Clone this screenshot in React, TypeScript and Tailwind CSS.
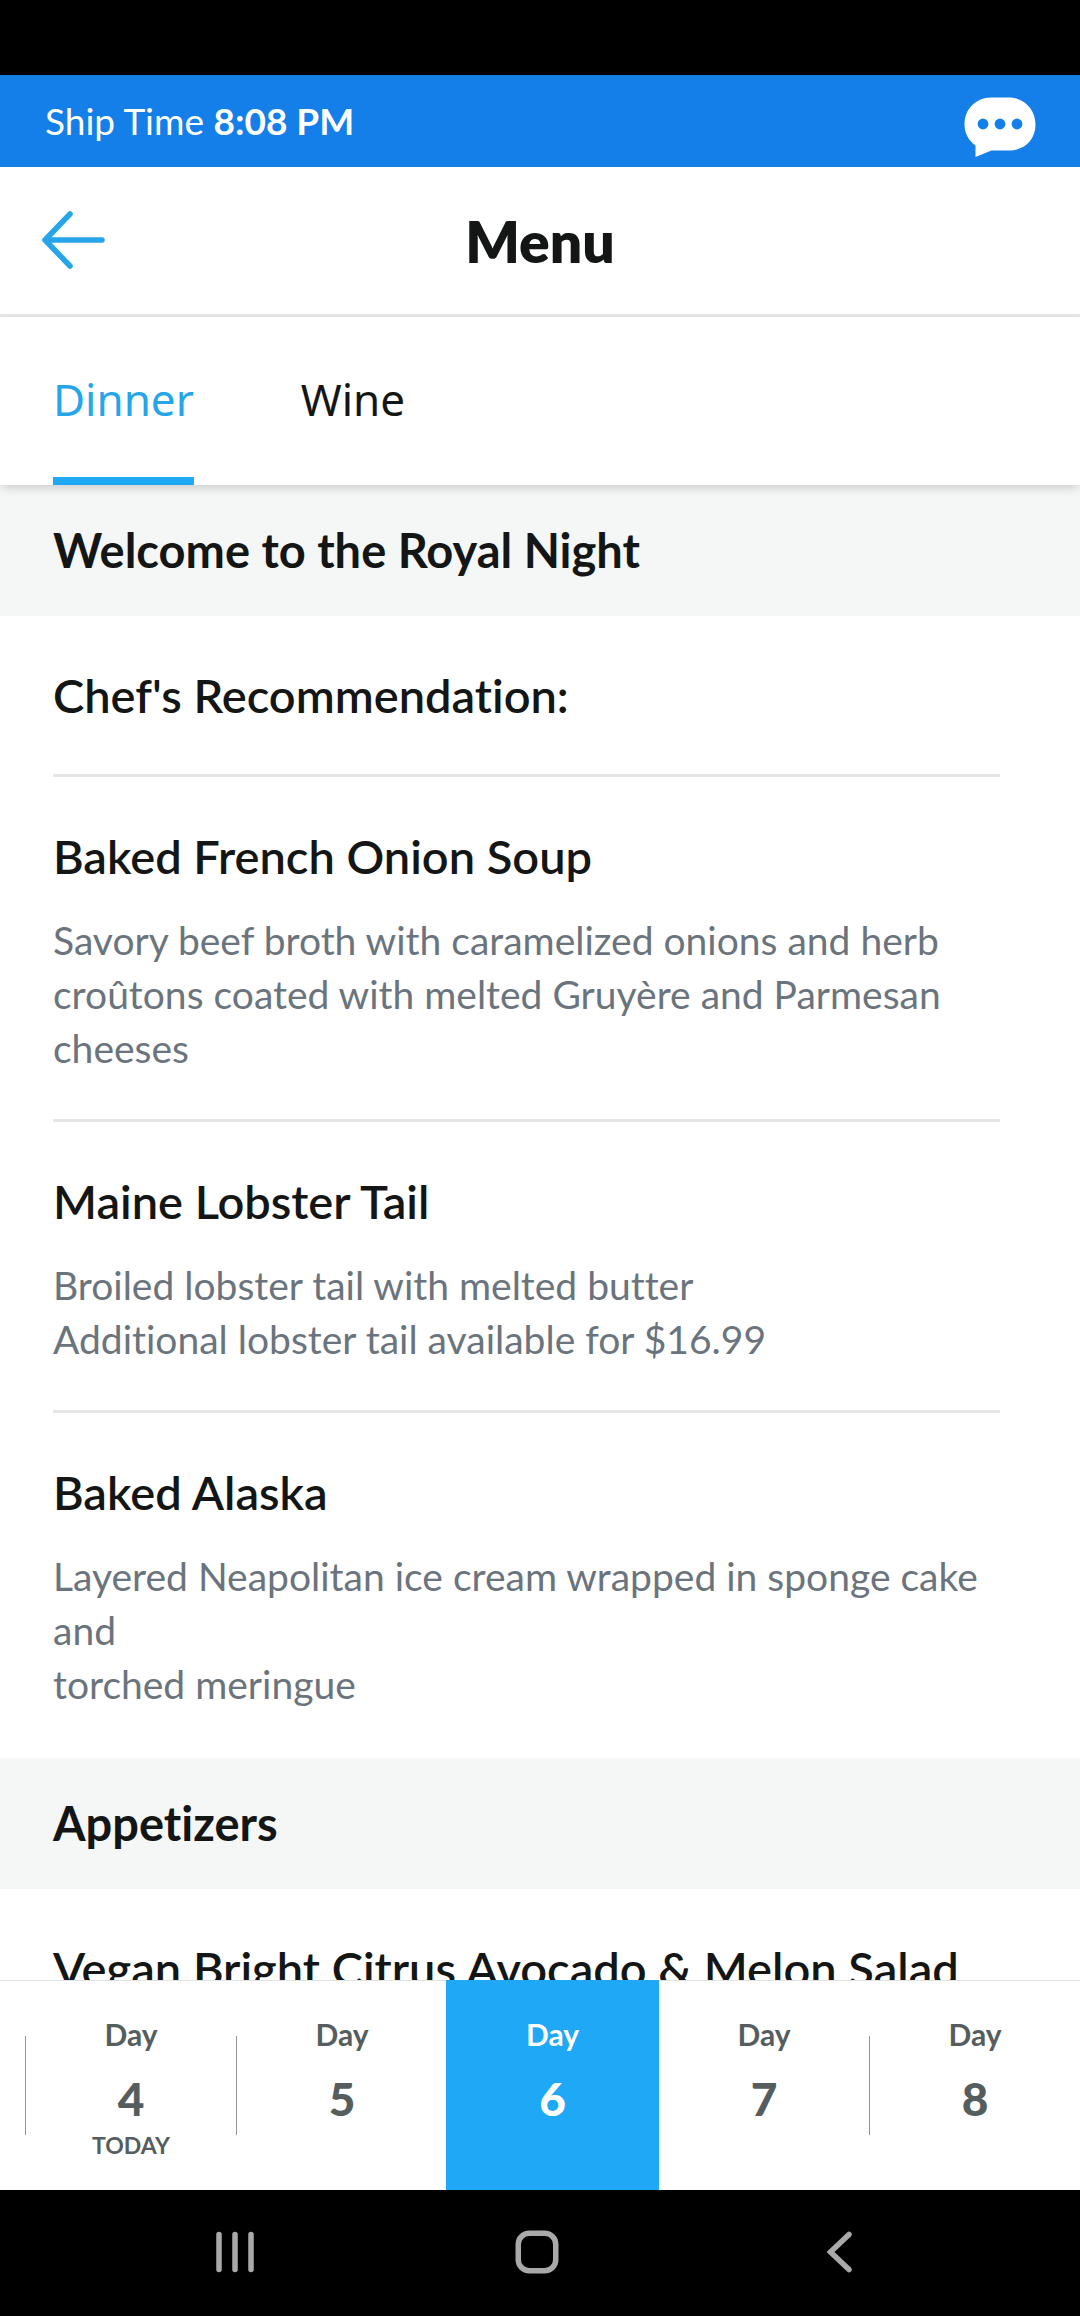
import clsx from "clsx";
import { useState } from "react";

type Dish = {
  name: string;
  description?: string;
};

type MenuSection = {
  title: string;
  dishes: Dish[];
};

const TABS = ["Dinner", "Wine"];

const SECTIONS: MenuSection[] = [
  {
    title: "Welcome to the Royal Night",
    dishes: [
      { name: "Chef's Recommendation:" },
      {
        name: "Baked French Onion Soup",
        description:
          "Savory beef broth with caramelized onions and herb croûtons coated with melted Gruyère and Parmesan cheeses",
      },
      {
        name: "Maine Lobster Tail",
        description:
          "Broiled lobster tail with melted butter\nAdditional lobster tail available for $16.99",
      },
      {
        name: "Baked Alaska",
        description:
          "Layered Neapolitan ice cream wrapped in sponge cake and\ntorched meringue",
      },
    ],
  },
  {
    title: "Appetizers",
    dishes: [{ name: "Vegan Bright Citrus Avocado & Melon Salad" }],
  },
];

const DAYS = [4, 5, 6, 7, 8];
const TODAY = 4;

function ChatIcon() {
  return (
    <svg width="72" height="60" viewBox="0 0 72 60" aria-hidden="true">
      <path
        d="M27 0.5H45C60 0.5 71.5 12 71.5 27.5S60 53.5 45 53.5H27.5L11.5 60V48.5C4.5 43.5 0.5 36 0.5 27.5C0.5 12 12 0.5 27 0.5Z"
        fill="#fff"
      />
      <circle cx="19" cy="27" r="5.4" fill="#147fe9" />
      <circle cx="36" cy="27" r="5.4" fill="#147fe9" />
      <circle cx="53" cy="27" r="5.4" fill="#147fe9" />
    </svg>
  );
}

function BackArrowIcon() {
  return (
    <svg width="64" height="62" viewBox="0 0 64 62" fill="none" aria-hidden="true">
      <path
        d="M28 4L3 30L28 56M5 30H60"
        stroke="#26a5e8"
        strokeWidth="5.5"
        strokeLinecap="round"
        strokeLinejoin="round"
      />
    </svg>
  );
}

function StatusBar() {
  return (
    <div className="flex h-[92px] shrink-0 items-center justify-between bg-[#147fe9] pr-11 pl-[45px] text-white">
      <p className="text-[37px] leading-[44px]">
        Ship Time <span className="font-bold">8:08 PM</span>
      </p>
      <button type="button" aria-label="Chat" className="pt-3">
        <ChatIcon />
      </button>
    </div>
  );
}

function PageHeader() {
  return (
    <header className="grid h-[150px] shrink-0 grid-cols-[1fr_auto_1fr] items-center border-b-3 border-[#e6e6e6] px-[42px]">
      <button type="button" aria-label="Back" className="justify-self-start">
        <BackArrowIcon />
      </button>
      <h1 className="text-[57px] leading-[64px] font-extrabold">Menu</h1>
    </header>
  );
}

function SectionBlock({ section }: { section: MenuSection }) {
  return (
    <section>
      <h2 className="bg-[#f5f7f7] px-[53px] py-9 text-[47px] leading-[59px] font-bold">
        {section.title}
      </h2>
      <ul className="pr-20 pl-[53px]">
        {section.dishes.map((dish) => (
          <li
            key={dish.name}
            className={clsx(
              "border-b-3 border-[#e6e6e6] pt-[53px] last:border-transparent",
              dish.description ? "pb-11" : "pb-[53px]",
            )}
          >
            <h3 className="text-[47px] leading-[52px] font-semibold">{dish.name}</h3>
            {dish.description ? (
              <p className="mt-[31px] text-[39px] leading-[54px] whitespace-pre-line text-[#6b747d]">
                {dish.description}
              </p>
            ) : null}
          </li>
        ))}
      </ul>
    </section>
  );
}

function DayPicker({ day, onSelect }: { day: number; onSelect: (day: number) => void }) {
  return (
    <nav aria-label="Cruise days" className="h-[210px] shrink-0 border-t border-[#e2e4e4] pl-[25px]">
      <ul className="grid h-full grid-cols-5">
        {DAYS.map((item) => {
          const isSelected = item === day;
          const hasDivider = !isSelected && item !== day + 1;

          return (
            <li key={item} className={clsx("flex items-center", isSelected && "-mt-px")}>
              {!isSelected ? (
                <span className={clsx("h-[99px] w-px", hasDivider && "bg-[#909595]")} />
              ) : null}
              <button
                type="button"
                aria-pressed={isSelected}
                onClick={() => onSelect(item)}
                className={clsx(
                  "flex h-full flex-1 flex-col items-center font-bold",
                  isSelected ? "-mx-px bg-[#1ea8f5] pt-9 text-white" : "pt-[35px] text-[#565d5e]",
                )}
              >
                <span className="text-[30px] leading-[36px]">Day</span>
                <span className="mt-4 text-[46px] leading-[62px] font-black">{item}</span>
                {item === TODAY ? (
                  <span className="text-[23px] leading-[30px]">TODAY</span>
                ) : null}
              </button>
            </li>
          );
        })}
      </ul>
    </nav>
  );
}

function SystemNav() {
  return (
    <div className="flex h-[126px] shrink-0 items-center justify-center gap-[258px] bg-black pr-[7px] pb-[2px] text-[#a9a9a9]">
      <button type="button" aria-label="Recent apps">
        <svg width="44" height="44" viewBox="0 0 44 44" stroke="currentColor" strokeWidth="5.5" strokeLinecap="round">
          <path d="M6 4.5V39.5M22 4.5V39.5M38 4.5V39.5" />
        </svg>
      </button>
      <button type="button" aria-label="Home">
        <svg width="44" height="44" viewBox="0 0 44 44" fill="none" stroke="currentColor" strokeWidth="5.5">
          <rect x="3.25" y="3.25" width="37.5" height="37.5" rx="11" />
        </svg>
      </button>
      <button type="button" aria-label="Go back">
        <svg width="44" height="44" viewBox="0 0 44 44" fill="none" stroke="currentColor" strokeWidth="5.5" strokeLinecap="round">
          <path d="M32 4.5L13.5 22L32 39.5" />
        </svg>
      </button>
    </div>
  );
}

export default function App() {
  const [tab, setTab] = useState("Dinner");
  const [day, setDay] = useState(6);

  return (
    <div className="flex h-screen flex-col bg-white font-[Lato,'Open_Sans',sans-serif] text-[#141616] [font-variant-ligatures:none]">
      <div className="h-[75px] shrink-0 bg-black" />
      <StatusBar />
      <PageHeader />
      <div
        role="tablist"
        className="z-10 flex h-[168px] shrink-0 gap-[107px] bg-white px-[53px] font-['Noto_Sans',sans-serif] text-[44px] shadow-[0_4px_10px_-2px_rgba(0,0,0,0.2)]"
      >
        {TABS.map((item) => (
          <button
            key={item}
            type="button"
            role="tab"
            aria-selected={item === tab}
            onClick={() => setTab(item)}
            className={clsx(
              "border-b-8 pt-1",
              item === tab ? "border-[#1ea8f5] text-[#26a5e8]" : "border-transparent",
            )}
          >
            {item}
          </button>
        ))}
      </div>
      <main className="min-h-0 flex-1 overflow-hidden">
        {SECTIONS.map((section) => (
          <SectionBlock key={section.title} section={section} />
        ))}
      </main>
      <DayPicker day={day} onSelect={setDay} />
      <SystemNav />
    </div>
  );
}
